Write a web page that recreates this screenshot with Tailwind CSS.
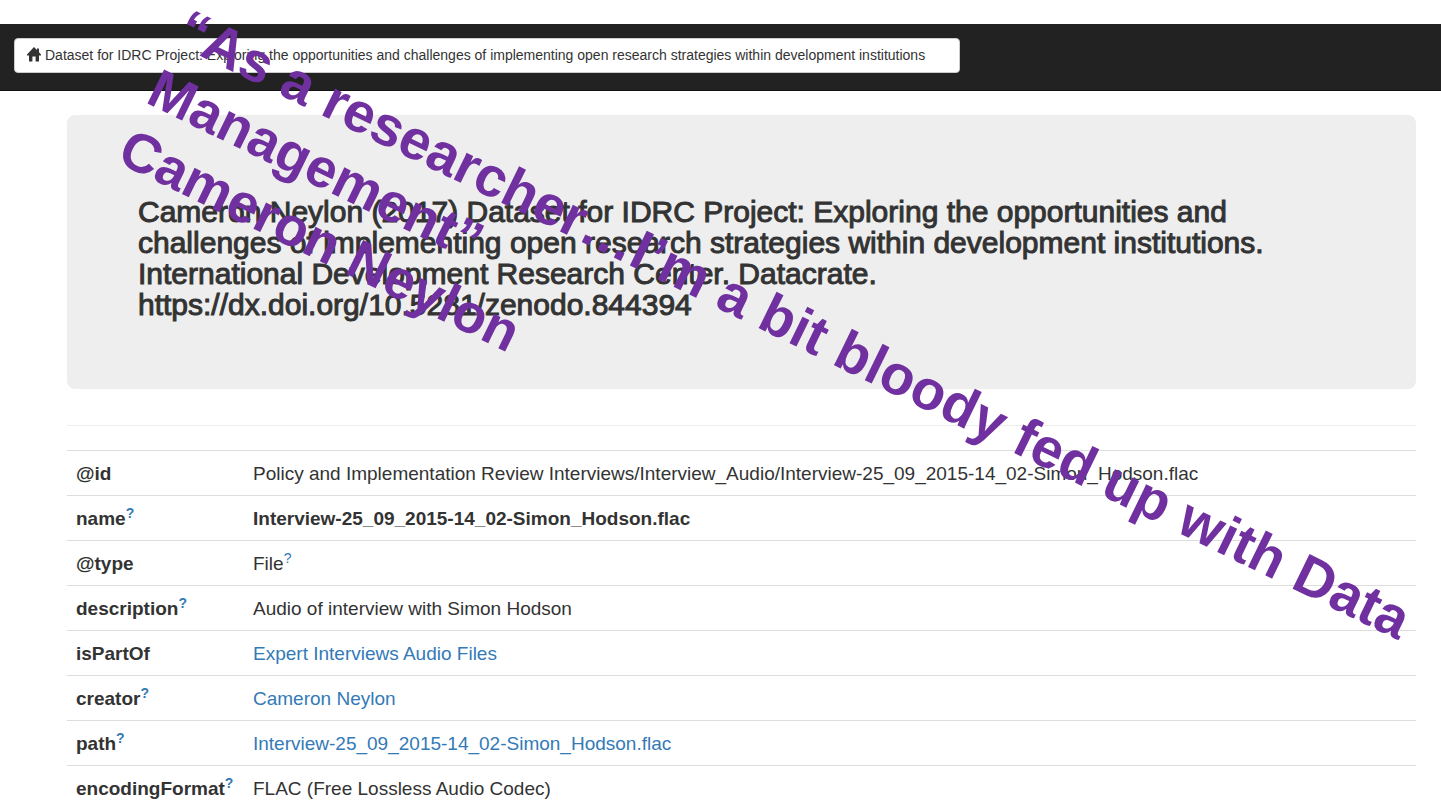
<!DOCTYPE html>
<html lang="en">
<head>
<meta charset="utf-8">
<meta name="viewport" content="width=device-width, initial-scale=1">
<title>Dataset for IDRC Project</title>
<script src="https://cdn.jsdelivr.net/npm/@tailwindcss/browser@4"></script>
</head>
<body class="relative overflow-hidden bg-white pt-6 font-['Liberation_Sans',Arial,sans-serif] text-[#333333]">
<nav class="flex h-[67px] items-start border-b border-[#101010] bg-[#222222] px-3.5 pt-3.5">
  <a href="#" class="flex h-[35px] min-w-[946px] items-center gap-1 rounded border border-[#cccccc] bg-white px-3 pb-0.5 text-sm whitespace-nowrap">
    <svg class="h-[15px] w-[14px]" viewBox="0 0 14 15" fill="#333333" aria-hidden="true"><path d="M7 0 L10 3.1 V1.5 H12 V5.2 L14 7.4 V8.4 H12 V14.6 H8.6 V9.4 H5.4 V14.6 H2 V8.4 H0 V7.4 Z"/></svg>
    <span>Dataset for IDRC Project: Exploring the opportunities and challenges of implementing open research strategies within development institutions</span>
  </a>
</nav>
<main class="pr-[25px] pl-[67px]">
  <header class="mt-6 rounded-lg bg-[#eeeeee] px-[71px] pt-[81px] pb-[69px]">
    <h1 class="max-w-[1150px] text-[30px] leading-[31px] font-normal [-webkit-text-stroke:1px_#333333]">Cameron Neylon (2017) Dataset for IDRC Project: Exploring the opportunities and challenges of implementing open research strategies within development institutions. International Development Research Center. Datacrate. https://dx.doi.org/10.5281/zenodo.844394</h1>
  </header>
  <hr class="mt-9 mb-6 border-[#eeeeee]">
  <table class="w-full table-fixed border-collapse text-left text-[19px] leading-6 [&_a]:text-[#337ab7] [&_sup]:text-sm [&_td]:px-[9px] [&_td]:pt-0.5 [&_th]:px-[9px] [&_th]:pt-0.5 [&_tr]:h-[45px] [&_tr]:border-t [&_tr]:border-[#dddddd]">
    <colgroup><col class="w-[177px]"><col></colgroup>
    <tbody>
      <tr><th scope="row">@id</th><td>Policy and Implementation Review Interviews/Interview_Audio/Interview-25_09_2015-14_02-Simon_Hodson.flac</td></tr>
      <tr><th scope="row">name<sup><a href="#">?</a></sup></th><td class="font-bold">Interview-25_09_2015-14_02-Simon_Hodson.flac</td></tr>
      <tr><th scope="row">@type</th><td>File<sup><a href="#">?</a></sup></td></tr>
      <tr><th scope="row">description<sup><a href="#">?</a></sup></th><td>Audio of interview with Simon Hodson</td></tr>
      <tr><th scope="row">isPartOf</th><td><a href="#">Expert Interviews Audio Files</a></td></tr>
      <tr><th scope="row">creator<sup><a href="#">?</a></sup></th><td><a href="#">Cameron Neylon</a></td></tr>
      <tr><th scope="row">path<sup><a href="#">?</a></sup></th><td><a href="#">Interview-25_09_2015-14_02-Simon_Hodson.flac</a></td></tr>
      <tr><th scope="row">encodingFormat<sup><a href="#">?</a></sup></th><td>FLAC (Free Lossless Audio Codec)</td></tr>
    </tbody>
  </table>
</main>
<p class="pointer-events-none absolute -top-1 left-[196px] origin-top-left rotate-[26deg] text-[55px] leading-[66px] font-bold whitespace-nowrap text-[#7030a0]"><span class="text-[56px]">“As a researcher…I’m a bit bloody fed up with Data</span><br>Management”<br>Cameron Neylon</p>
</body>
</html>
